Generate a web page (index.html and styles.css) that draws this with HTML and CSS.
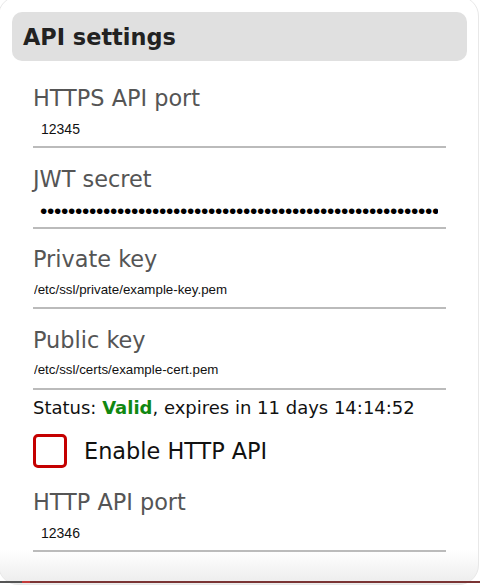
FILE: index.html
```html
<!DOCTYPE html>
<html lang="en">
<head>
<meta charset="utf-8">
<title>API settings</title>
<link rel="stylesheet" href="styles.css">
</head>
<body>
<div class="card">
  <h2 class="card-title">API settings</h2>
  <div class="fields">
    <div class="field field-first">
      <label class="field-label" for="https-port">HTTPS API port</label>
      <input class="field-input" id="https-port" type="text" value="12345">
    </div>
    <div class="field">
      <label class="field-label" for="jwt">JWT secret</label>
      <input class="field-input field-password" id="jwt" type="password" value="abcdefghijklmnopqrstuvwxyzabcdefghijklmnopqrstuvwxyzabcdefghijklmnop">
    </div>
    <div class="field">
      <label class="field-label" for="priv">Private key</label>
      <input class="field-input field-path" id="priv" type="text" value="/etc/ssl/private/example-key.pem">
    </div>
    <div class="field">
      <label class="field-label" for="pub">Public key</label>
      <input class="field-input field-path" id="pub" type="text" value="/etc/ssl/certs/example-cert.pem">
    </div>
    <p class="status">Status: <span class="status-valid">Valid</span>, expires in 11 days 14:14:52</p>
    <label class="check-row">
      <input class="check-box" type="checkbox">
      <span class="check-text">Enable HTTP API</span>
    </label>
    <div class="field field-after-check">
      <label class="field-label" for="http-port">HTTP API port</label>
      <input class="field-input" id="http-port" type="text" value="12346">
    </div>
  </div>
</div>
<div class="bottom-strip"></div>
</body>
</html>
```

FILE: styles.css
```css
html, body {
  margin: 0;
  padding: 0;
  background: #ffffff;
}

body {
  width: 480px;
  height: 587px;
  overflow: hidden;
  font-family: Verdana, "DejaVu Sans", sans-serif;
}

.card {
  box-sizing: border-box;
  width: 481px;
  height: 589px;
  margin: -4px 0 0 -2px;
  padding: 15px 11px 0 13px;
  border: 1px solid #e8e8e8;
  border-radius: 20px;
  background: linear-gradient(to bottom, #ffffff 0, #ffffff calc(100% - 34px), #ececec 100%);
}

.card-title {
  box-sizing: border-box;
  height: 49px;
  margin: 0;
  padding: 1px 0 0 11px;
  line-height: 48px;
  font-size: 22.4px;
  font-weight: bold;
  color: #222222;
  background: #e0e0e0;
  border-radius: 10px;
}

.fields {
  display: flex;
  flex-direction: column;
  padding: 0 21px 0 21px;
}

.field {
  display: flex;
  flex-direction: column;
  margin-top: 17.5px;
}

.field-first {
  margin-top: 24.25px;
}

.field-after-check {
  margin-top: 21.5px;
}

.field-label {
  display: block;
  font-size: 22.4px;
  line-height: 26px;
  color: #555555;
}

.field-input {
  box-sizing: border-box;
  width: 100%;
  height: 37px;
  margin: 0;
  padding: 8px 8px 7px 8px;
  border: none;
  border-bottom: 2px solid #bbbbbb;
  border-radius: 0;
  outline: none;
  background: transparent;
  font-family: Arial, "Liberation Sans", sans-serif;
  font-size: 14px;
  color: #111111;
}

.field-password {
  font-size: 21px;
  letter-spacing: -0.35px;
  padding: 7px 8px 4px 7px;
  color: #000000;
}

.field-path {
  padding: 7px 1px 8px 1px;
  font-size: 13.33px;
}

.status {
  margin: 7px 0 0 0;
  font-size: 18px;
  line-height: 22px;
  color: #111111;
}

.status-valid {
  font-weight: bold;
  color: #118811;
}

.check-row {
  display: flex;
  align-items: center;
  gap: 17px;
  margin-top: 15px;
  height: 34px;
}

.check-box {
  appearance: none;
  -webkit-appearance: none;
  box-sizing: border-box;
  width: 34px;
  height: 34px;
  margin: 0;
  border: 3px solid #c40000;
  border-radius: 5px;
  background: #ffffff;
  flex: none;
}

.check-text {
  font-size: 22.4px;
  line-height: 26px;
  color: #111111;
}

.bottom-strip {
  height: 2px;
  margin-top: -4px;
  position: relative;
  background: linear-gradient(to right, #555555 0, #555555 22px, #c23a3a 22px, #c23a3a 30px, #7a3434 30px, #7a3434 100%);
}
```
